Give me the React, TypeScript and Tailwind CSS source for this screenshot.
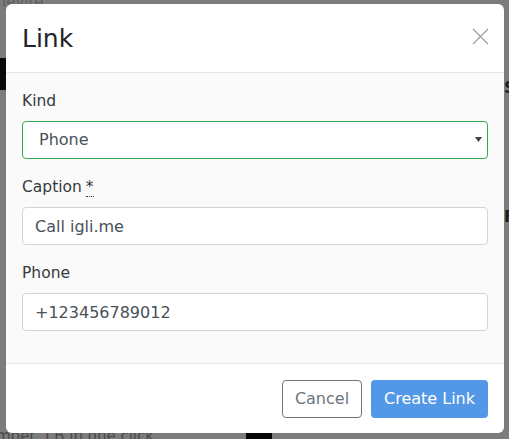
import { useState } from 'react';

const FONT = { fontFamily: '"DejaVu Sans", "Noto Sans", sans-serif' };

function CloseIcon() {
  return (
    <svg width="17" height="17" viewBox="0 0 17 17" fill="none">
      <path d="M1 1 L16 16 M16 1 L1 16" stroke="#9a9a9a" strokeWidth="1.1" />
    </svg>
  );
}

function Field({ label, required, children }: { label: string; required?: boolean; children: React.ReactNode }) {
  return (
    <div className="mb-4">
      <label className="mb-2 block text-[15.5px] leading-6 text-[#333a40]">
        {label}
        {required && (
          <abbr className="ml-1 no-underline border-b border-dotted border-[#333a40]" title="required">
            *
          </abbr>
        )}
      </label>
      {children}
    </div>
  );
}

const inputCls =
  'h-[38px] w-full rounded border border-[#ced4da] bg-white px-3 text-[16px] text-[#495057] outline-none';

export default function App() {
  const [kind, setKind] = useState('Phone');
  const [caption, setCaption] = useState('Call igli.me');
  const [phone, setPhone] = useState('+123456789012');

  return (
    <div className="relative h-[439px] w-[509px] overflow-hidden bg-[#7c7c7c]" style={FONT}>
      {/* page behind the overlay */}
      <span className="absolute left-[2px] top-[-9px] text-[15px] text-[#5e5e5e]">levite</span>
      <div className="absolute left-0 top-[58px] h-[32px] w-[8px] bg-[#0a0a0a]" />
      <span className="absolute left-[504px] top-[76px] text-[16px] font-bold text-[#1e1e1e]">S</span>
      <span className="absolute left-[504px] top-[205px] text-[16px] font-bold text-[#1e1e1e]">F</span>
      <span className="absolute left-[-4px] top-[425px] text-[15px] text-[#4a4a4a]">mber, I B in one click</span>
      <div className="absolute left-[246px] top-[433px] h-[6px] w-[26px] bg-[#050505]" />

      <div className="relative ml-[6px] mt-[4px] w-[498px] overflow-hidden rounded-md bg-white">
        <div className="flex h-[69px] items-center justify-between border-b border-[#e6e6e6] px-4">
          <h2 className="text-[25px] leading-none text-[#212529]">Link</h2>
          <button className="mr-[-1px] mt-[-4px]" aria-label="Close">
            <CloseIcon />
          </button>
        </div>

        <div className="bg-[#fafafa] p-4 pb-0">
          <Field label="Kind">
            <div className="relative">
              <select
                value={kind}
                onChange={(e) => setKind(e.target.value)}
                className="h-[38px] w-full appearance-none rounded border border-[#32a852] bg-white pl-4 text-[16px] text-[#495057] outline-none"
              >
                <option>Phone</option>
                <option>Email</option>
                <option>URL</option>
              </select>
              <svg className="pointer-events-none absolute right-[6px] top-[16px]" width="7" height="5" viewBox="0 0 7 5">
                <path d="M0 0 H7 L3.5 5 Z" fill="#444" />
              </svg>
            </div>
          </Field>
          <Field label="Caption" required>
            <input value={caption} onChange={(e) => setCaption(e.target.value)} className={inputCls} />
          </Field>
          <div className="pb-4">
            <Field label="Phone">
              <input value={phone} onChange={(e) => setPhone(e.target.value)} className={inputCls} />
            </Field>
          </div>
        </div>

        <div className="flex justify-end gap-[9px] border-t border-[#e6e6e6] px-4 pb-[15px] pt-4">
          <button className="h-[38px] w-[80px] rounded border border-[#6c757d] bg-white text-[16px] text-[#6c757d]">
            Cancel
          </button>
          <button className="h-[38px] w-[117px] rounded bg-[#5398e6] text-[16px] text-white">Create Link</button>
        </div>
      </div>
    </div>
  );
}
